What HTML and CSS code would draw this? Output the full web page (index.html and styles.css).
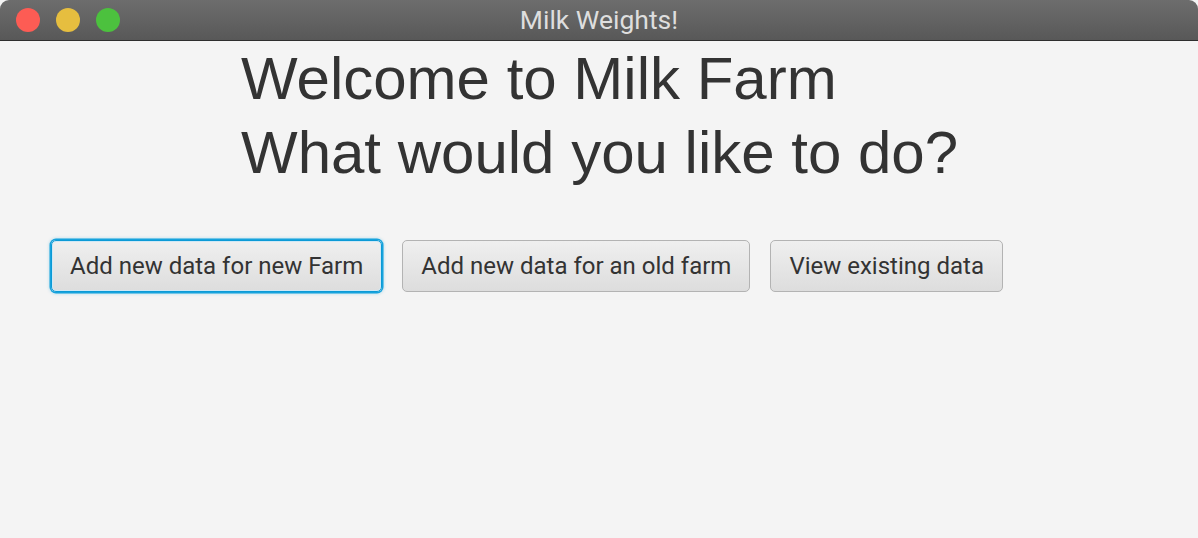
FILE: index.html
```html
<!DOCTYPE html>
<html lang="en">
<head>
<meta charset="utf-8">
<title>Milk Weights!</title>
<link rel="stylesheet" href="styles.css">
</head>
<body>
<div class="window">
  <header class="titlebar">
    <div class="lights">
      <span class="light red"></span>
      <span class="light yellow"></span>
      <span class="light green"></span>
    </div>
    <div class="title">Milk Weights!</div>
  </header>
  <main class="content">
    <h1 class="heading">Welcome to Milk Farm<br>What would you like to do?</h1>
    <div class="actions">
      <button class="btn focused">Add new data for new Farm</button>
      <button class="btn">Add new data for an old farm</button>
      <button class="btn">View existing data</button>
    </div>
  </main>
</div>
</body>
</html>
```

FILE: styles.css
```css
html, body {
  margin: 0;
  padding: 0;
  width: 1198px;
  height: 538px;
  overflow: hidden;
  background: #f4f4f4;
}

.window {
  width: 1198px;
  height: 538px;
  display: flex;
  flex-direction: column;
  background: #f4f4f4;
}

.titlebar {
  position: relative;
  height: 40px;
  flex: 0 0 40px;
  border-bottom: 1px solid #2e2e2e;
  background: linear-gradient(#6d6d6d, #585858);
  border-radius: 9px 9px 0 0;
  display: flex;
  align-items: center;
}

.lights {
  display: flex;
  gap: 16px;
  padding-left: 16px;
}

.light {
  width: 24px;
  height: 24px;
  border-radius: 50%;
  display: block;
}
.red { background: #fd5c54; }
.yellow { background: #e6be3f; }
.green { background: #4cc13e; }

.title {
  position: absolute;
  left: 0;
  right: 0;
  top: 0;
  height: 40px;
  line-height: 40px;
  text-align: center;
  font-family: Roboto, "Liberation Sans", sans-serif;
  font-size: 26.5px;
  color: #dedede;
}

.content {
  flex: 1;
  display: flex;
  flex-direction: column;
}

.heading {
  margin: 1px 0 0 0;
  padding-left: 241px;
  font-family: "Liberation Sans", Arial, sans-serif;
  font-weight: normal;
  font-size: 60px;
  line-height: 74px;
  color: #333333;
}

.actions {
  display: flex;
  gap: 20px;
  margin-top: 50px;
  padding-left: 51px;
}

.btn {
  height: 52px;
  padding: 0 18px;
  box-sizing: border-box;
  border: 1px solid #b3b3b3;
  border-radius: 5px;
  background: linear-gradient(#efefef, #dddddd);
  font-family: Roboto, "Liberation Sans", sans-serif;
  font-size: 24px;
  color: #333333;
  cursor: default;
}

.btn.focused {
  border-color: #0b9ad6;
  box-shadow: 0 0 0 1.5px #17a3dd, inset 0 0 0 1px #cfe8f5, 0 0 3px 2px rgba(23, 163, 221, 0.25);
}
```
